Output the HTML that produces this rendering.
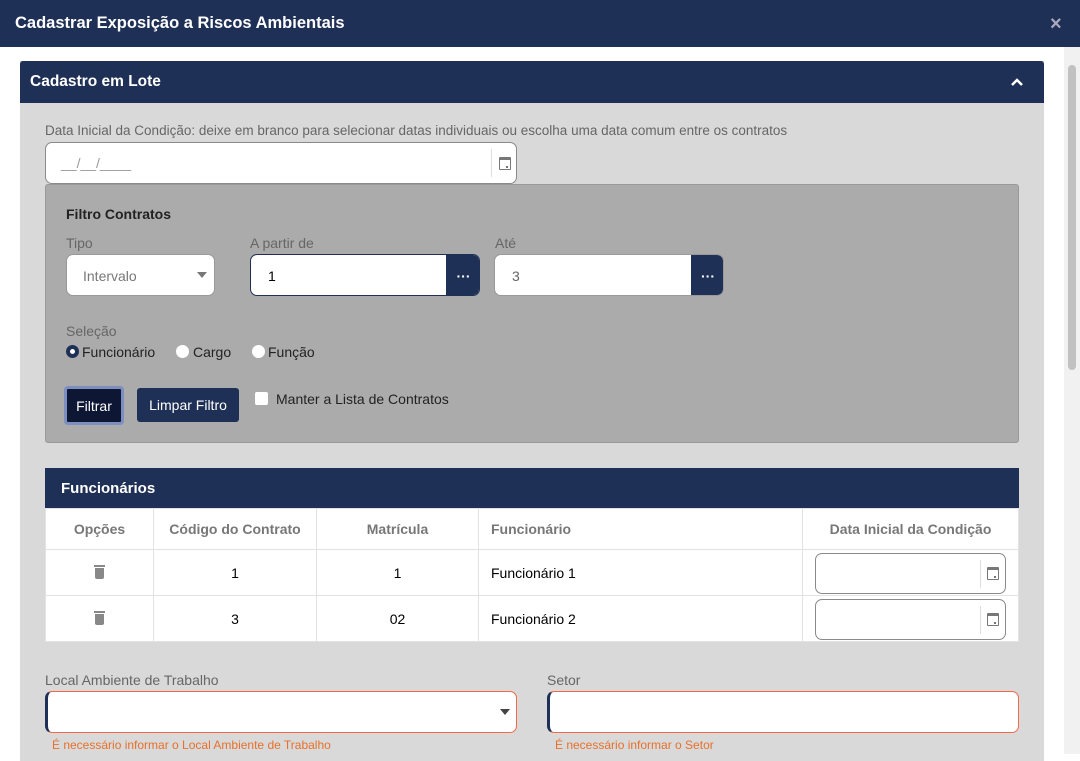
<!DOCTYPE html><html><head><meta charset="utf-8"><style>
*{box-sizing:border-box;margin:0;padding:0}
body{width:1080px;height:754px;overflow:hidden;background:#fff;font-family:"Liberation Sans",Arial,sans-serif;position:relative}
.a{position:absolute}
.navy{background:#1f3057;color:#fff}
.inp{background:#fff;border:1px solid #8a8a8a;border-radius:7px}
.lbl{font-size:14px;color:#666}
.btn{background:#1f3057;color:#fff;font-size:14px;border-radius:3px;display:flex;align-items:center;justify-content:center}
.cal{width:12px;height:13px;border:1.5px solid #777;border-top-width:3px;border-radius:1px}
.cal:after{content:"";position:absolute;right:2px;bottom:1px;width:2px;height:2px;background:#777}
td,th{border:1px solid #e2e2e2;font-size:14px;height:46px}
th{font-weight:bold;color:#777;height:41px}
.tr{display:inline-block;width:9px;height:11px;background:#888;border-radius:0 0 2px 2px;position:relative;vertical-align:middle}
.tr:before{content:"";position:absolute;left:-1px;top:-3px;width:11px;height:2px;background:#888}
</style></head><body>
<div class="a navy" style="left:0;top:0;width:1080px;height:47px"><div class="a" style="left:15px;top:14px;font-size:16.5px;font-weight:bold">Cadastrar Exposição a Riscos Ambientais</div><div class="a" style="left:1050px;top:13px;font-size:20px;color:#aab;font-weight:bold">×</div></div>
<div class="a" style="left:1064px;top:47px;width:16px;height:707px;background:#f1f1f1"><div class="a" style="left:4px;top:18px;width:8px;height:305px;background:#c1c1c1;border-radius:4px"></div></div>
<div class="a" style="left:20px;top:61px;width:1024px;height:700px;background:#d9d9d9"></div>
<div class="a navy" style="left:20px;top:61px;width:1024px;height:42px;border-radius:3px 3px 0 0"><div class="a" style="left:10px;top:12px;font-size:15.5px;font-weight:bold">Cadastro em Lote</div>
<svg class="a" style="left:990px;top:15px" width="14" height="12"><path d="M2 9 L7 4 L12 9" stroke="#fff" stroke-width="2.5" fill="none"/></svg></div>
<div class="a lbl" style="left:45px;top:123px;font-size:13.5px">Data Inicial da Condição: deixe em branco para selecionar datas individuais ou escolha uma data comum entre os contratos</div>
<div class="a inp" style="left:45px;top:142px;width:472px;height:42px"><div class="a" style="left:15px;top:12px;color:#999;font-size:14px">__/__/____</div><div class="a" style="left:445px;top:6px;width:1px;height:28px;background:#ddd"></div><div class="a cal" style="left:453px;top:14px"></div></div>
<div class="a" style="left:45px;top:184px;width:974px;height:259px;background:#ababab;border:1px solid #999;border-radius:3px"></div>
<div class="a" style="left:66px;top:206px;font-size:14px;font-weight:bold;color:#222">Filtro Contratos</div>
<div class="a lbl" style="left:66px;top:235px">Tipo</div><div class="a lbl" style="left:250px;top:235px">A partir de</div><div class="a lbl" style="left:495px;top:235px">Até</div>
<div class="a inp" style="left:66px;top:254px;width:149px;height:42px;border-color:#999"><div class="a" style="left:16px;top:13px;font-size:14px;color:#777">Intervalo</div><div class="a" style="left:130px;top:17px;border:5px solid transparent;border-top:6px solid #777"></div></div>
<div class="a inp" style="left:250px;top:254px;width:230px;height:42px;border-color:#1f3057;overflow:hidden"><div class="a" style="left:17px;top:13px;font-size:14px">1</div><div class="a btn" style="left:195px;top:0;width:35px;height:42px;border-radius:0;font-weight:bold">···</div></div>
<div class="a inp" style="left:494px;top:254px;width:230px;height:42px;border-color:#999;overflow:hidden"><div class="a" style="left:17px;top:13px;font-size:14px;color:#666">3</div><div class="a btn" style="left:196px;top:0;width:34px;height:42px;border-radius:0;font-weight:bold">···</div></div>
<div class="a lbl" style="left:66px;top:323px">Seleção</div>
<div class="a" style="left:66px;top:345px;width:13px;height:13px;border-radius:50%;border:4px solid #1f3057;background:#fff"></div>
<div class="a" style="left:82px;top:344px;font-size:14px;color:#222">Funcionário</div>
<div class="a" style="left:176px;top:345px;width:13px;height:13px;border-radius:50%;background:#fff"></div><div class="a" style="left:193px;top:344px;font-size:14px;color:#222">Cargo</div>
<div class="a" style="left:252px;top:345px;width:13px;height:13px;border-radius:50%;background:#fff"></div><div class="a" style="left:268px;top:344px;font-size:14px;color:#222">Função</div>
<div class="a btn" style="left:64px;top:386px;width:60px;height:39px;background:#0d1633;border:3px solid #7c8fc0;border-radius:4px">Filtrar</div>
<div class="a btn" style="left:137px;top:388px;width:102px;height:34px">Limpar Filtro</div>
<div class="a" style="left:255px;top:392px;width:13px;height:13px;background:#fff;border-radius:2px"></div>
<div class="a" style="left:276px;top:391px;font-size:14px;color:#222">Manter a Lista de Contratos</div>
<div class="a navy" style="left:45px;top:468px;width:974px;height:40px"><div class="a" style="left:16px;top:12px;font-size:15px;font-weight:bold">Funcionários</div></div>
<table class="a" style="left:45px;top:508px;width:974px;border-collapse:collapse;background:#fff;text-align:center">
<tr><th style="width:108px">Opções</th><th style="width:163px">Código do Contrato</th><th style="width:162px">Matrícula</th><th style="width:324px;text-align:left;padding-left:12px">Funcionário</th><th>Data Inicial da Condição</th></tr>
<tr><td><span class="tr"></span></td><td>1</td><td>1</td><td style="text-align:left;padding-left:12px">Funcionário 1</td><td style="position:relative"><div class="a inp" style="left:12px;top:3px;width:191px;height:41px"><div class="a" style="left:164px;top:6px;width:1px;height:28px;background:#ddd"></div><div class="a cal" style="left:171px;top:13px"></div></div></td></tr>
<tr><td><span class="tr"></span></td><td>3</td><td>02</td><td style="text-align:left;padding-left:12px">Funcionário 2</td><td style="position:relative"><div class="a inp" style="left:12px;top:3px;width:191px;height:41px"><div class="a" style="left:164px;top:6px;width:1px;height:28px;background:#ddd"></div><div class="a cal" style="left:171px;top:13px"></div></div></td></tr>
</table>
<div class="a lbl" style="left:45px;top:672px">Local Ambiente de Trabalho</div><div class="a lbl" style="left:547px;top:672px">Setor</div>
<div class="a inp" style="left:45px;top:691px;width:472px;height:42px;border-color:#f06a4a;border-left:3px solid #1f3057"><div class="a" style="left:452px;top:17px;border:5px solid transparent;border-top:6px solid #444"></div></div>
<div class="a inp" style="left:547px;top:691px;width:472px;height:42px;border-color:#f06a4a;border-left:3px solid #1f3057"></div>
<div class="a" style="left:52px;top:738px;font-size:12px;color:#e8702a">É necessário informar o Local Ambiente de Trabalho</div>
<div class="a" style="left:555px;top:738px;font-size:12px;color:#e8702a">É necessário informar o Setor</div>
</body></html>
